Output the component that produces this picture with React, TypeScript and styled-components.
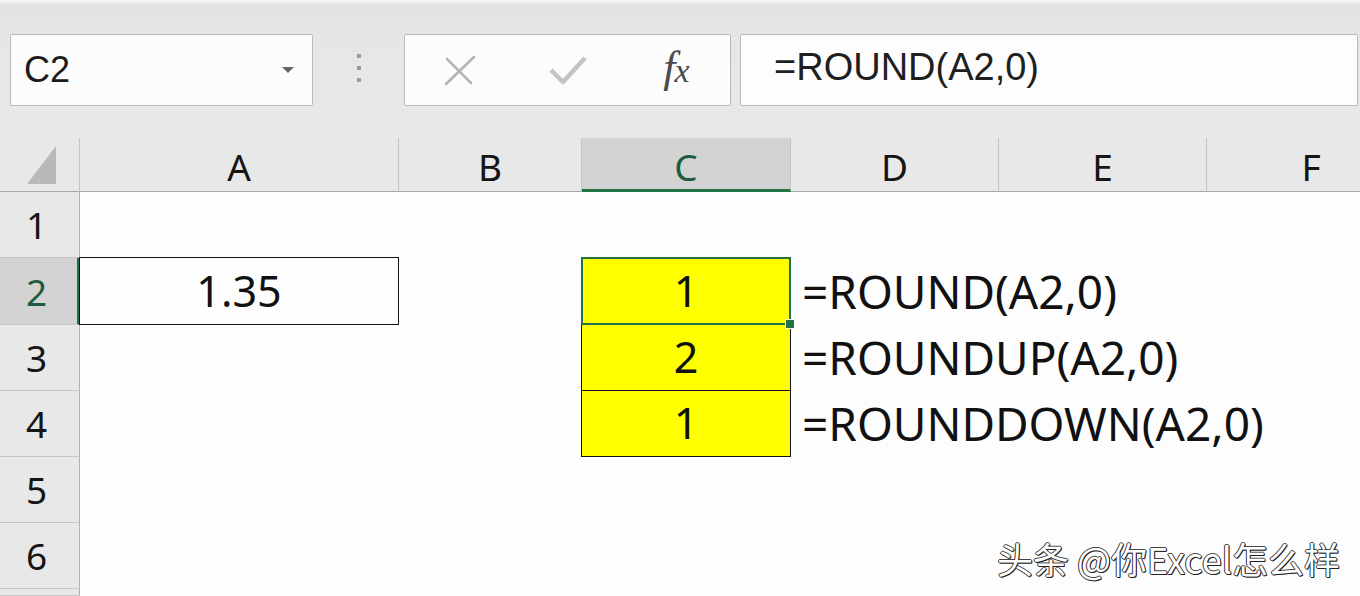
import React from 'react';
import styled, {createGlobalStyle} from "styled-components";

const GlobalStyle = createGlobalStyle`
  html, body {
    margin: 0;
    padding: 0;
    background: #ffffff;
    overflow: hidden;
  }
`

const SHEET_FONT = `"Noto Sans", "Open Sans", sans-serif`
const GREEN = "#217346"

const columns = [
    {name: "", width: 80},
    {name: "A", width: 319},
    {name: "B", width: 183},
    {name: "C", width: 209},
    {name: "D", width: 208},
    {name: "E", width: 208},
    {name: "F", width: 208},
]

const rowHeights = [66, 67, 66, 66, 66, 66, 7]

type CellData = {
    text?: string
    fill?: string
    boxed?: boolean
    selected?: boolean
    formula?: boolean
}

const cells: Record<string, CellData> = {
    A2: {text: "1.35", boxed: true},
    C2: {text: "1", fill: "#ffff00", boxed: true, selected: true},
    C3: {text: "2", fill: "#ffff00", boxed: true},
    C4: {text: "1", fill: "#ffff00", boxed: true},
    D2: {text: "=ROUND(A2,0)", formula: true},
    D3: {text: "=ROUNDUP(A2,0)", formula: true},
    D4: {text: "=ROUNDDOWN(A2,0)", formula: true},
}

const App = () => {
    return (
        <Window>
            <GlobalStyle/>
            <Toolbar>
                <NameBox>
                    <NameText>C2</NameText>
                    <DropArrow/>
                </NameBox>
                <Grip>
                    <Dot/><Dot/><Dot/>
                </Grip>
                <ButtonsBox>
                    <IconSlot>
                        <svg width="38" height="38" viewBox="0 0 38 38">
                            <path d="M5 33 L33 6" stroke="#b4b4b4" strokeWidth="2.6" fill="none" strokeLinecap="round"/>
                            <path d="M6 8 L30 32" stroke="#b4b4b4" strokeWidth="2.6" fill="none" strokeLinecap="round"/>
                        </svg>
                    </IconSlot>
                    <IconSlot>
                        <svg width="40" height="36" viewBox="0 0 40 36">
                            <path d="M3 18 L15 30 L37 6" stroke="#c4c4c4" strokeWidth="4.5" fill="none" strokeLinejoin="round"/>
                        </svg>
                    </IconSlot>
                    <IconSlot>
                        <Fx>f<small>x</small></Fx>
                    </IconSlot>
                </ButtonsBox>
                <FormulaBox>=ROUND(A2,0)</FormulaBox>
            </Toolbar>
            <Sheet $cols={columns.map(c => c.width + "px").join(" ")} $rows={["54px", ...rowHeights.map(h => h + "px")].join(" ")}>
                <Corner>
                    <svg width="30" height="40" viewBox="0 0 30 40">
                        <polygon points="0,39 29,39 29,1" fill="#b9b9b9"/>
                    </svg>
                </Corner>
                {columns.slice(1).map((c, i) => (
                    <ColHeader key={c.name} $selected={c.name === "C"} $last={i === columns.length - 2}>
                        {c.name}
                    </ColHeader>
                ))}
                {rowHeights.map((h, r) => {
                    const rowNum = r + 1
                    return (
                        <React.Fragment key={rowNum}>
                            <RowHeader $selected={rowNum === 2}>{h > 20 ? rowNum : ""}</RowHeader>
                            {columns.slice(1).map(c => {
                                const id = c.name + rowNum
                                const data = cells[id]
                                return (
                                    <Cell key={id}
                                          $fill={data?.fill}
                                          $boxed={data?.boxed}
                                          $selected={data?.selected}
                                          $formula={data?.formula}>
                                        {data?.text}
                                        {data?.selected && <FillHandle/>}
                                    </Cell>
                                )
                            })}
                        </React.Fragment>
                    )
                })}
                <Watermark>头条 @你Excel怎么样</Watermark>
            </Sheet>
        </Window>
    );
};

export default App;

const Window = styled.div`
  width: 1360px;
  height: 596px;
  display: flex;
  flex-direction: column;
  overflow: hidden;
  position: relative;
  background: #ffffff;
`

const Toolbar = styled.div`
  height: 138px;
  box-sizing: border-box;
  padding: 34px 2px 32px 10px;
  display: flex;
  align-items: stretch;
  background: linear-gradient(#f4f4f4 0px, #f4f4f4 2px, #e3e3e3 4px, #e6e6e6 40px, #e8e8e8 100%);
`

const NameBox = styled.div`
  width: 303px;
  flex-shrink: 0;
  box-sizing: border-box;
  background: #fcfcfd;
  border: 1px solid #b9b9b9;
  border-radius: 2px;
  display: flex;
  align-items: center;
  justify-content: space-between;
  padding: 0 18px 0 13px;
`

const NameText = styled.span`
  font-family: "Liberation Sans", Arial, sans-serif;
  font-size: 36px;
  color: #1a1a1a;
`

const DropArrow = styled.span`
  width: 0;
  height: 0;
  border-left: 6px solid transparent;
  border-right: 6px solid transparent;
  border-top: 6px solid #666666;
`

const Grip = styled.div`
  width: 91px;
  flex-shrink: 0;
  display: flex;
  flex-direction: column;
  align-items: center;
  justify-content: center;
  gap: 8px;
  padding-bottom: 4px;
`

const Dot = styled.span`
  width: 4px;
  height: 4px;
  background: #9a9a9a;
`

const ButtonsBox = styled.div`
  width: 327px;
  flex-shrink: 0;
  box-sizing: border-box;
  background: #fcfcfd;
  border: 1px solid #b9b9b9;
  border-radius: 2px;
  display: grid;
  grid-template-columns: 108px 108px 1fr;
  align-items: center;
  padding-left: 1px;
  margin-right: 9px;
`

const IconSlot = styled.div`
  display: flex;
  align-items: center;
  justify-content: center;
`

const Fx = styled.span`
  font-family: "Liberation Serif", "Times New Roman", serif;
  font-style: italic;
  font-size: 44px;
  line-height: 1;
  color: #4a4a4a;
  letter-spacing: -1px;
  padding-bottom: 4px;

  small {
    font-size: 34px;
  }
`

const FormulaBox = styled.div`
  flex: 1;
  box-sizing: border-box;
  background: #fdfdfd;
  border: 1px solid #b9b9b9;
  border-radius: 2px;
  display: flex;
  align-items: center;
  padding: 0 0 6px 33px;
  font-family: "Liberation Sans", Arial, sans-serif;
  font-size: 38px;
  color: #1f1f1f;
`

const Sheet = styled.div<{$cols: string, $rows: string}>`
  flex: 1;
  display: grid;
  grid-template-columns: ${p => p.$cols};
  grid-template-rows: ${p => p.$rows};
  position: relative;
  background: #fdfdfe;
`

const Corner = styled.div`
  background: #e8e8e8;
  border-right: 1px solid #c4c4c4;
  border-bottom: 1px solid #a9a9a9;
  box-sizing: border-box;
  display: flex;
  align-items: flex-end;
  justify-content: flex-end;
  padding: 0 22px 6px 0;
`

const ColHeader = styled.div<{$selected?: boolean, $last?: boolean}>`
  box-sizing: border-box;
  background: ${p => p.$selected ? "#d3d3d3" : "#e8e8e8"};
  border-right: ${p => p.$last ? "none" : "1px solid #c2c2c2"};
  border-bottom: ${p => p.$selected ? `3px solid ${GREEN}` : "1px solid #a9a9a9"};
  display: flex;
  align-items: center;
  justify-content: center;
  padding-top: ${p => p.$selected ? "6px" : "4px"};
  font-family: ${SHEET_FONT};
  font-size: 37px;
  color: ${p => p.$selected ? "#1f5c3d" : "#151515"};
`

const RowHeader = styled.div<{$selected?: boolean}>`
  box-sizing: border-box;
  background: ${p => p.$selected ? "#d3d3d3" : "#e8e8e8"};
  border-right: ${p => p.$selected ? `3px solid ${GREEN}` : "1px solid #b2b2b2"};
  border-bottom: 1px solid #c6c6c6;
  display: flex;
  align-items: center;
  justify-content: center;
  padding-right: ${p => p.$selected ? "4px" : "6px"};
  font-family: ${SHEET_FONT};
  font-size: 37px;
  color: ${p => p.$selected ? "#1f5c3d" : "#151515"};
  overflow: hidden;
`

const Cell = styled.div<{$fill?: string, $boxed?: boolean, $selected?: boolean, $formula?: boolean}>`
  position: relative;
  box-sizing: border-box;
  background: ${p => p.$fill ?? "transparent"};
  border: ${p => p.$selected ? `2px solid ${GREEN}` : p.$boxed ? "1.5px solid #151515" : "none"};
  margin: ${p => p.$boxed ? "-1px 0 0 -1px" : "0"};
  display: flex;
  align-items: center;
  justify-content: ${p => p.$formula ? "flex-start" : "center"};
  padding-left: ${p => p.$formula ? "11px" : "0"};
  padding-bottom: 2px;
  white-space: nowrap;
  overflow: visible;
  font-family: ${SHEET_FONT};
  font-size: ${p => p.$formula ? "46px" : "43px"};
  color: #111111;
  z-index: ${p => p.$selected ? 2 : 1};
`

const FillHandle = styled.span`
  position: absolute;
  right: -6px;
  bottom: -6px;
  width: 8px;
  height: 8px;
  background: ${GREEN};
  border: 1px solid #ffffff;
`

const Watermark = styled.div`
  position: absolute;
  right: 20px;
  bottom: 12px;
  font-family: "Noto Sans CJK SC", "Noto Sans", sans-serif;
  font-size: 36px;
  color: #ffffff;
  text-shadow: -1px 0 #333, 1px 1px #222, 0 -1px #444, 1px 0 #333, 0 1px #333;
  z-index: 5;
`
